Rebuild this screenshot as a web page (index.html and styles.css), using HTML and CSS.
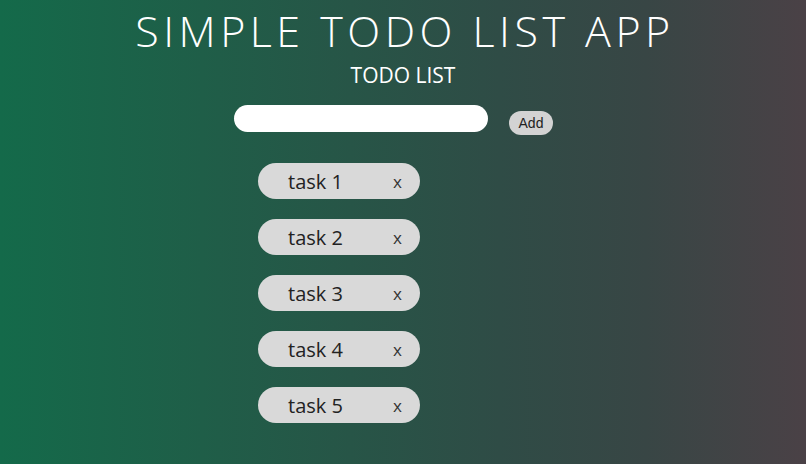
FILE: index.html
```html
<!DOCTYPE html>
<html>
<head>
<meta charset="utf-8">
<link rel="stylesheet" href="styles.css">
</head>
<body>
<div class="app">
  <h1 class="title">SIMPLE TODO LIST APP</h1>
  <h2 class="subtitle">TODO LIST</h2>
  <div class="form">
    <input class="field" type="text">
    <button class="add">Add</button>
  </div>
  <ul class="list">
    <li class="item"><span class="text">task 1</span><button class="del">x</button></li>
    <li class="item"><span class="text">task 2</span><button class="del">x</button></li>
    <li class="item"><span class="text">task 3</span><button class="del">x</button></li>
    <li class="item"><span class="text">task 4</span><button class="del">x</button></li>
    <li class="item"><span class="text">task 5</span><button class="del">x</button></li>
  </ul>
</div>
</body>
</html>
```
FILE: styles.css
```css
html, body {
  margin: 0;
  padding: 0;
  height: 100%;
}
body {
  background: linear-gradient(to right, #146a4a 0%, #1f5e48 25%, #2f4c46 62%, #384645 80%, #4a4146 100%);
  font-family: "Open Sans", sans-serif;
  color: #fff;
  overflow: hidden;
}
.app {
  display: flex;
  flex-direction: column;
  align-items: center;
}
.title {
  margin: 6px 0 0;
  font-size: 43px;
  font-weight: 300;
  letter-spacing: 4.5px;
  line-height: 50px;
  padding-left: 4px;
}
.subtitle {
  margin: 7px 0 0;
  font-size: 21px;
  font-weight: 400;
  line-height: 24px;
}
.form {
  display: flex;
  align-items: flex-end;
  gap: 21px;
  margin-top: 18px;
  margin-right: 19px;
}
.field {
  width: 254px;
  height: 27px;
  box-sizing: border-box;
  border: none;
  border-radius: 14px;
  background: #fff;
  outline: none;
}
.add {
  font-family: "Liberation Sans", Arial, sans-serif;
  font-size: 14px;
  color: #222;
  background: #d3d3d3;
  border: none;
  border-radius: 12px;
  height: 24px;
  padding: 0 10px;
  margin-bottom: -3px;
}
.list {
  list-style: none;
  margin: 31px 0 0;
  padding: 0;
  width: 290px;
  display: flex;
  flex-direction: column;
  align-items: flex-start;
  gap: 20px;
}
.item {
  display: flex;
  align-items: center;
  height: 36px;
  background: #d9d9d9;
  border-radius: 18px;
  padding: 0 18px 0 30px;
  color: #222;
}
.text {
  font-size: 20px;
  font-weight: 400;
}
.del {
  margin-left: 50px;
  background: none;
  border: none;
  padding: 0;
  font-family: "Open Sans", sans-serif;
  font-size: 17px;
  color: #333;
}
```
